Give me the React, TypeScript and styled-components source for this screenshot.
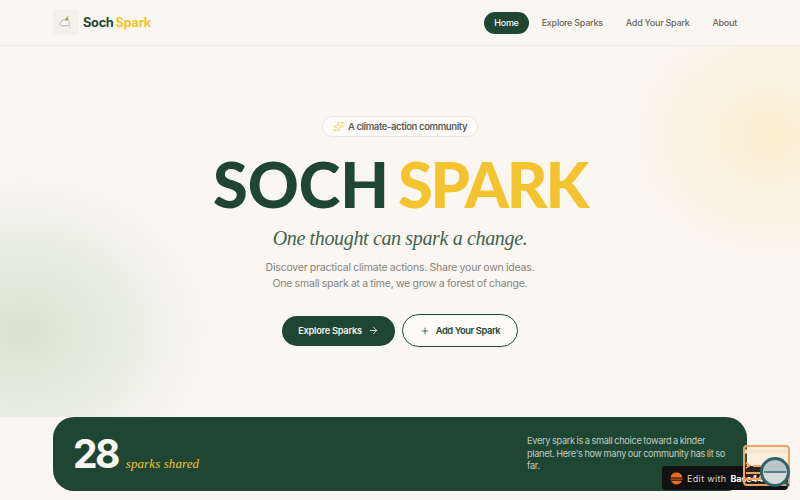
import React from "react";
import styled, { createGlobalStyle } from "styled-components";
import { ArrowRight, Plus, Sparkles } from "lucide-react";

const Global = createGlobalStyle`
  html, body { margin: 0; padding: 0; height: 500px; overflow: hidden; background: #faf7f2; }
  * { box-sizing: border-box; }
  body { font-family: "Inter", "Liberation Sans", sans-serif; color: #1f4633; }
`;

const Page = styled.div`
  position: relative;
  width: 800px;
  height: 500px;
  overflow: hidden;
  background: #faf7f2;
`;

const Header = styled.header`
  position: relative;
  height: 46px;
  padding: 0 53px;
  display: flex;
  align-items: center;
  justify-content: space-between;
  border-bottom: 1px solid #f1ece3;
  background: #faf7f2;
  z-index: 2;
`;

const Brand = styled.div`
  display: flex;
  align-items: center;
  gap: 4px;
`;

const LogoTile = styled.div`
  width: 26px;
  height: 26px;
  margin-top: -1px;
  background: #f4f1ea;
  border-radius: 4px;
  display: flex;
  align-items: center;
  justify-content: center;
`;

const BrandName = styled.div`
  font-size: 12.8px;
  font-weight: 700;
  letter-spacing: -0.3px;
  display: flex;
  gap: 2px;
`;

const Accent = styled.span`
  color: #f4c430;
`;

const Nav = styled.nav`
  display: flex;
  align-items: center;
  gap: 3px;
`;

const NavItem = styled.a<{ $active?: boolean }>`
  height: 22px;
  padding: 0 10px;
  border-radius: 11px;
  display: flex;
  align-items: center;
  font-size: 9px;
  font-weight: 500;
  letter-spacing: -0.26px;
  color: ${(p) => (p.$active ? "#faf7f2" : "#69675f")};
  background: ${(p) => (p.$active ? "#1f4633" : "transparent")};
`;

const Blob = styled.div<{ $kind: "sun" | "leaf" }>`
  position: absolute;
  pointer-events: none;
  border-radius: 50%;
  ${(p) =>
    p.$kind === "sun"
      ? `left: 620px; top: -40px; width: 300px; height: 260px;
         background: radial-gradient(closest-side, rgba(250, 222, 150, 0.38), rgba(250, 222, 150, 0));`
      : `left: -170px; top: 125px; width: 385px; height: 320px;
         background: radial-gradient(closest-side, rgba(165, 195, 155, 0.4), rgba(165, 195, 155, 0));`}
`;

const Hero = styled.main`
  position: relative;
  height: 371px;
  padding-top: 70px;
  display: flex;
  flex-direction: column;
  align-items: center;
  overflow: hidden;
  z-index: 1;
`;

const Pill = styled.div`
  position: relative;
  height: 21px;
  padding: 0 10px;
  display: flex;
  align-items: center;
  gap: 4px;
  border: 1px solid #ebe7df;
  border-radius: 11px;
  background: #fdfcf9;
  font-size: 9.5px;
  font-weight: 600;
  letter-spacing: -0.4px;
  color: #5c6158;
`;

const Title = styled.h1`
  position: relative;
  margin: 11px 0 0;
  font-family: "Lato", "Inter", sans-serif;
  font-size: 63px;
  line-height: 72px;
  font-weight: 900;
  display: flex;
  gap: 9px;
  color: #1f4633;
`;

const TitleWord = styled.span<{ $accent?: boolean }>`
  letter-spacing: ${(p) => (p.$accent ? "-2.2px" : "0")};
  color: ${(p) => (p.$accent ? "#f4c430" : "#1f4633")};
`;

const Tagline = styled.p`
  position: relative;
  margin: 5px 0 0;
  font-family: "Liberation Serif", serif;
  font-style: italic;
  font-size: 20px;
  line-height: 26px;
  font-weight: 400;
  letter-spacing: -0.35px;
  color: #3f6350;
`;

const Lead = styled.p`
  position: relative;
  margin: 9px 0 0;
  font-size: 10.5px;
  line-height: 16px;
  font-weight: 400;
  letter-spacing: -0.2px;
  word-spacing: -0.4px;
  text-align: center;
  color: #85847c;
`;

const Actions = styled.div`
  position: relative;
  margin-top: 22px;
  display: flex;
  align-items: center;
  gap: 7px;
`;

const Primary = styled.a`
  width: 113px;
  height: 30px;
  border-radius: 15px;
  display: flex;
  align-items: center;
  justify-content: center;
  gap: 6px;
  background: #1f4633;
  color: #f5f1e9;
  font-size: 9.3px;
  font-weight: 600;
  letter-spacing: -0.3px;
`;

const Secondary = styled.a`
  width: 116px;
  height: 33px;
  border-radius: 17px;
  display: flex;
  align-items: center;
  justify-content: center;
  gap: 6px;
  background: #fdfcf9;
  border: 1.5px solid #1f4633;
  color: #1f4633;
  font-size: 9.3px;
  font-weight: 600;
  letter-spacing: -0.4px;
`;

const Stats = styled.section`
  position: relative;
  z-index: 1;
  margin: 0 53px;
  height: 74px;
  border-radius: 21px;
  background: #1f4633;
  padding: 0 15px 0 20px;
  display: flex;
  align-items: center;
  justify-content: space-between;
`;

const Count = styled.div`
  display: flex;
  align-items: baseline;
  gap: 8px;
`;

const Number = styled.span`
  font-size: 39px;
  line-height: 74px;
  font-weight: 700;
  letter-spacing: -2.6px;
  color: #faf7f2;
`;

const CountLabel = styled.span`
  font-family: "Liberation Serif", serif;
  font-style: italic;
  font-size: 13px;
  letter-spacing: 0.1px;
  color: #f4c430;
`;

const Blurb = styled.p`
  margin: 0;
  width: 205px;
  font-size: 9.2px;
  line-height: 12.5px;
  letter-spacing: -0.3px;
  word-spacing: -0.5px;
  color: #bfcdc4;
`;

const Badge = styled.div`
  position: absolute;
  left: 662px;
  top: 466px;
  width: 126px;
  height: 24px;
  padding-left: 8px;
  border-radius: 4px;
  background: #111;
  display: flex;
  align-items: center;
  gap: 4px;
  z-index: 3;
  font-size: 9px;
  letter-spacing: 0.35px;
  color: #d8d8d8;
`;

const BadgeBrand = styled.b`
  font-weight: 700;
  letter-spacing: -0.2px;
  color: #fff;
`;

const Inspector = styled.svg`
  position: absolute;
  left: 740px;
  top: 442px;
  z-index: 4;
`;

function Logo() {
  return (
    <svg width="18" height="18" viewBox="0 0 18 18" fill="none">
      <path d="M4 12.5c-1.4-1-1.2-3.2.5-3.8.3-1.8 3-2.8 4.6-1.4 2-.2 3.5 1.4 3 3.2.9.8.4 2.2-.8 2.2H5.4C4.9 12.7 4.4 12.7 4 12.5Z" fill="#fbf8ef" stroke="#a9ab9c" strokeWidth="0.9" />
      <path d="M12.5 13.6l1 1.2" stroke="#a9ab9c" strokeWidth="0.9" />
      <path d="M8 7.5c.3-1.8 1.2-3 3-4-.2 1.4.1 2.4.6 3.4" fill="#8aa65a" />
      <path d="M9.7 3.4l1.6-.6.2 1.8" fill="#f4c430" />
    </svg>
  );
}

export default function App() {
  return (
    <Page>
      <Global />
      <Header>
        <Brand>
          <LogoTile>
            <Logo />
          </LogoTile>
          <BrandName>
            <span>Soch</span>
            <Accent>Spark</Accent>
          </BrandName>
        </Brand>
        <Nav>
          <NavItem $active>Home</NavItem>
          <NavItem>Explore Sparks</NavItem>
          <NavItem>Add Your Spark</NavItem>
          <NavItem>About</NavItem>
        </Nav>
      </Header>
      <Hero>
        <Blob $kind="sun" />
        <Blob $kind="leaf" />
        <Pill>
          <Sparkles size={11} color="#f4d35e" strokeWidth={2} />
          A climate-action community
        </Pill>
        <Title>
          <TitleWord>SOCH</TitleWord>
          <TitleWord $accent>SPARK</TitleWord>
        </Title>
        <Tagline>One thought can spark a change.</Tagline>
        <Lead>
          Discover practical climate actions. Share your own ideas.
          <br />
          One small spark at a time, we grow a forest of change.
        </Lead>
        <Actions>
          <Primary>
            Explore Sparks <ArrowRight size={11} strokeWidth={1.8} />
          </Primary>
          <Secondary>
            <Plus size={10} strokeWidth={1.8} /> Add Your Spark
          </Secondary>
        </Actions>
      </Hero>
      <Stats>
        <Count>
          <Number>28</Number>
          <CountLabel>sparks shared</CountLabel>
        </Count>
        <Blurb>
          Every spark is a small choice toward a kinder planet. Here's how many our community has lit so far.
        </Blurb>
      </Stats>
      <Badge>
        <svg width="13" height="13" viewBox="0 0 13 13">
          <path d="M.6 5.4A6 6 0 0 1 12.4 5.4Z" fill="#f26b1d" />
          <path d="M.4 6.6h12.2v1H.4Z" fill="#f26b1d" />
          <path d="M1 8.8h11A6 6 0 0 1 1 8.8Z" fill="#f26b1d" />
        </svg>
        <span>Edit with</span>
        <BadgeBrand>Base44</BadgeBrand>
      </Badge>
      <Inspector width="54" height="50" viewBox="0 0 54 50" fill="none">
        <rect x="4" y="4" width="45" height="39" rx="3" fill="rgba(245,170,100,0.12)" stroke="#eea566" strokeWidth="2" />
        <path d="M5 9.5h43" stroke="#f7e3cd" strokeWidth="4" />
        <path d="M6 21l4 2.5-4 2.5" stroke="#eea566" strokeWidth="1.5" />
        <path d="M13 24h12M6 31h18M6 37h16" stroke="#eea566" strokeWidth="2" />
        <path d="M35 16.5a13.5 13.5 0 0 1 13.5 13.5h-27A13.5 13.5 0 0 1 35 16.5Z" fill="#b9c6c5" />
        <path d="M21.5 30h27A13.5 13.5 0 0 1 21.5 30Z" fill="#d5dbd9" />
        <circle cx="35" cy="30" r="13.5" stroke="#2c6469" strokeWidth="3" />
        <path d="M24 30h22" stroke="#2c6469" strokeWidth="1.5" />
        <path d="M45 40l4 4" stroke="#2c6469" strokeWidth="3" />
      </Inspector>
    </Page>
  );
}
